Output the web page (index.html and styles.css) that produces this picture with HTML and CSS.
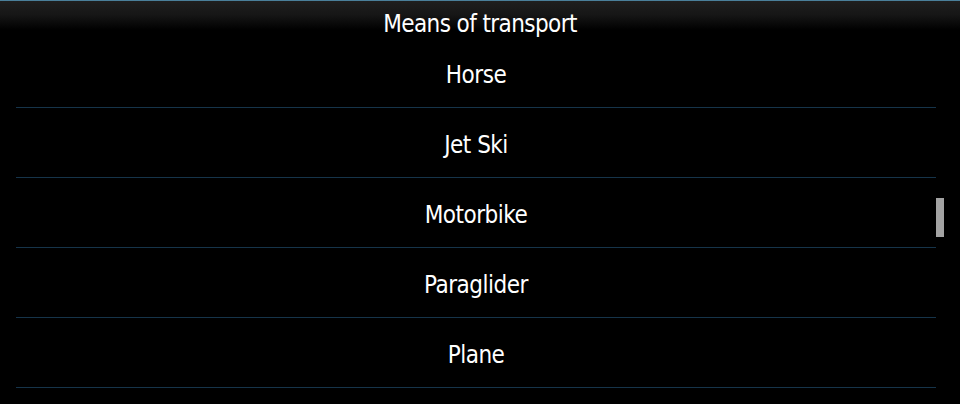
FILE: index.html
```html
<!DOCTYPE html>
<html lang="en">
<head>
<meta charset="utf-8">
<title>Means of transport</title>
<link rel="stylesheet" href="styles.css">
</head>
<body>
<div class="dialog">
  <header class="title-bar">
    <h1 class="title">Means of transport</h1>
  </header>
  <ul class="picker">
    <li class="picker-item">Horse</li>
    <li class="picker-item">Jet Ski</li>
    <li class="picker-item">Motorbike</li>
    <li class="picker-item">Paraglider</li>
    <li class="picker-item">Plane</li>
  </ul>
  <div class="scroll-indicator"></div>
</div>
</body>
</html>
```
FILE: styles.css
```css
html, body {
  margin: 0;
  padding: 0;
  background: #000;
}
body {
  width: 960px;
  height: 404px;
  overflow: hidden;
  font-family: "DejaVu Sans Condensed", "DejaVu Sans", sans-serif;
  color: #fff;
}
.dialog {
  position: relative;
  height: 404px;
  overflow: hidden;
}
.title-bar {
  height: 38px;
  box-sizing: border-box;
  border-top: 1px solid #4a7f9a;
  background: linear-gradient(to bottom, #1f1f1f 0px, #161616 14px, #000 29px);
  display: flex;
  justify-content: center;
  align-items: center;
  padding-top: 9px;
}
.title {
  margin: 0;
  font-size: 24px;
  font-weight: normal;
  letter-spacing: -0.6px;
  line-height: 1;
}
.picker {
  list-style: none;
  margin: 0 24px 0 16px;
  padding: 0;
}
.picker-item {
  height: 70px;
  box-sizing: border-box;
  border-bottom: 1px solid #16344a;
  display: flex;
  justify-content: center;
  align-items: center;
  font-size: 24px;
  letter-spacing: -0.5px;
  padding-top: 5px;
}
.scroll-indicator {
  position: absolute;
  left: 936px;
  top: 198px;
  width: 8px;
  height: 39px;
  background: #a3a3a3;
}
```
